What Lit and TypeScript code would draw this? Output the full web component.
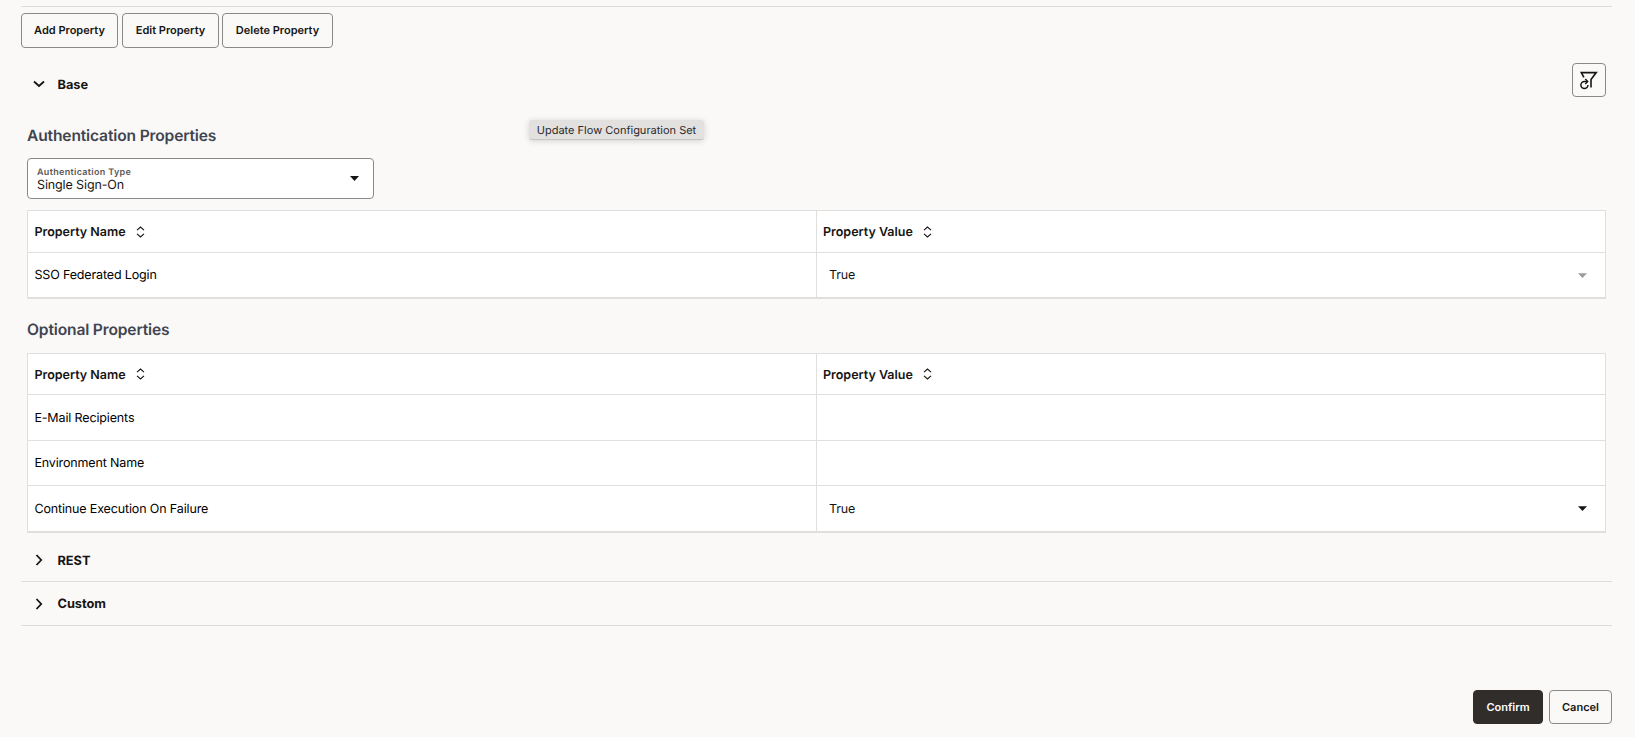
import { LitElement, html, css, svg, nothing } from "lit";
import { customElement, property } from "lit/decorators.js";

const font = css`Inter, "Liberation Sans", sans-serif`;

@customElement("property-table")
class PropertyTable extends LitElement {
  @property({ attribute: false }) rows: { name: string; value?: string; disabled?: boolean }[] = [];

  static styles = css`
    :host { display: block; font-family: ${font}; color: #161513; }
    .table { background: #fff; border: 1px solid #e1dfdd; border-bottom-width: 2px; }
    .row { display: grid; grid-template-columns: 788px 1fr; height: 45px; border-top: 1px solid #e1dfdd; box-sizing: border-box; }
    .row.head { border-top: 0; height: 41px; }
    :host(.compact) .row.head { height: 40px; }
    :host(.compact) .row:nth-child(2) { height: 46px; }
    :host(.compact) .row:nth-child(4) { height: 46px; }
    .cell { display: flex; align-items: center; padding-left: 6.4px; font-size: 12.5px; letter-spacing: -0.14px; color: #000; }
    .cell span { padding-top: 1px; }
    .cell + .cell { border-left: 1px solid #e1dfdd; padding-left: 6px; }
    .head .cell { font-weight: 600; color: #161513; letter-spacing: 0; }
    .head .cell span { padding-top: 2px; }
    .sort { margin-left: 10px; width: 9px; height: 12px; }
    .cell.value { padding-left: 12px; padding-right: 18px; justify-content: space-between; color: #161513; }
    .arrow { width: 9px; height: 5px; }
    .disabled { opacity: 0.42; }
  `;

  header(label: string) {
    return html`<div class="cell"><span>${label}</span>
      <svg class="sort" viewBox="0 0 9 12" fill="none" stroke="#161513" stroke-width="1.15">
        <path d="M1 4.2 4.5 1 8 4.2M1 7.8 4.5 11 8 7.8" />
      </svg></div>`;
  }

  render() {
    return html`<div class="table">
      <div class="row head">${this.header("Property Name")}${this.header("Property Value")}</div>
      ${this.rows.map(r => html`<div class="row">
        <div class="cell"><span>${r.name}</span></div>
        <div class="cell value">${r.value
          ? html`<span>${r.value}</span><svg class="arrow ${r.disabled ? "disabled" : ""}" viewBox="0 0 9 5"><path d="M0 .2h9L4.5 5z" fill="#161513" /></svg>`
          : nothing}</div>
      </div>`)}
    </div>`;
  }
}

@customElement("app-root")
class AppRoot extends LitElement {
  static styles = css`
    :host { display: block; font-family: ${font}; color: #161513; text-rendering: geometricPrecision; }
    * { box-sizing: border-box; }
    .page { position: relative; width: 1635px; height: 737px; padding: 6px 23px 0 21px; background: #faf9f8; display: flex; flex-direction: column; overflow: hidden; }
    .toolbar { border-top: 1px solid #dfddda; padding-top: 6px; display: flex; height: 42px; flex: none; }
    button { font: 600 11px ${font}; text-rendering: inherit; color: #161513; background: transparent; border: 1px solid #8b8987; border-radius: 4px; padding: 0; height: 34px; }
    .toolbar button { height: 35px; width: 97px; margin-right: 4px; padding-bottom: 1px; }
    .toolbar button + button { margin-right: 3px; }
    .toolbar .wide { width: 111px; }
    .base { display: flex; justify-content: space-between; padding: 15px 6px 0 0; height: 77px; flex: none; }
    .section { display: flex; align-items: center; padding-left: 12px; gap: 12.5px; font-size: 12.8px; letter-spacing: -0.05px; font-weight: 700; height: 43px; flex: none; }
    .section span { padding-top: 2px; }
    .base .section span { padding-top: 3px; }
    .base .section { height: 42px; }
    .section svg { width: 12px; height: 12px; }
    .line { border-bottom: 1px solid #dfddda; }
    .filter { width: 34px; height: 34px; display: grid; place-items: center; }
    .filter svg { width: 20px; height: 20px; }
    .body { padding: 0 6px; }
    h2 { margin: 0; padding-top: 1px; font-size: 15.6px; font-weight: 600; line-height: 20px; letter-spacing: -0.16px; color: #41444f; height: 20px; }
    .select { margin: 13px 0 11px; width: 347px; height: 41px; border: 1px solid #8b8987; border-radius: 4px; background: #fff; display: flex; align-items: center; justify-content: space-between; padding: 0 14.5px 0 9px; }
    .label { font-size: 9px; font-weight: 600; line-height: 11px; color: #5c5955; letter-spacing: 0.32px; margin-top: 3px; }
    .val { font-size: 12.5px; line-height: 15px; letter-spacing: -0.12px; color: #161513; }
    .select svg { width: 9px; height: 5px; margin-top: -1px; }
    .optional { margin: 20px 0 14px; }
    .rest { margin-top: 6px; height: 43px; }
    .custom { height: 44px; }
    .footer { display: flex; justify-content: flex-end; gap: 6px; margin-top: 64px; }
    .confirm { width: 70px; background: #312d2a; border-color: #312d2a; color: #fff; }
    .cancel { width: 63px; }
    .tooltip { position: absolute; left: 529px; top: 120px; width: 175px; height: 20px; display: flex; align-items: center; justify-content: center; font-size: 11px; color: #2b292c; background: #e2e1e0; border-radius: 3px; border-bottom: 1px solid #c6c5c4; box-shadow: 0 1px 6px rgba(0, 0, 0, 0.16); white-space: nowrap; }
  `;

  chevron(open: boolean) {
    return html`<svg viewBox="0 0 12 12" fill="none" stroke="#161513" stroke-width="1.8">
      ${open ? svg`<path d="M1 3.5 6 8 11 3.5" />` : svg`<path d="M3.5 1 8.2 6 3.5 11" />`}</svg>`;
  }

  render() {
    return html`<div class="page">
      <div class="toolbar">
        <button>Add Property</button><button>Edit Property</button><button class="wide">Delete Property</button>
      </div>
      <div class="base">
        <div class="section">${this.chevron(true)}<span>Base</span></div>
        <button class="filter" aria-label="Reset filter">
          <svg viewBox="0 0 20 20" fill="none" stroke="#161513" stroke-width="1.6">
            <path d="M4.9 7.4 2.3 2.6H17.2L12 9.4V17.6" />
            <path d="M8.9 15A3.5 3.5 0 1 1 5.4 11.5H8" stroke-width="1.5" />
            <path d="M6.3 8.9 8.7 11.4 6.3 13.9" stroke-width="1.4" />
          </svg>
        </button>
      </div>
      <div class="body">
        <h2 class="auth">Authentication Properties</h2>
        <div class="select">
          <div><div class="label">Authentication Type</div><div class="val">Single Sign-On</div></div>
          <svg viewBox="0 0 9 5"><path d="M0 0h9L4.5 5z" fill="#161513" /></svg>
        </div>
        <property-table .rows=${[{ name: "SSO Federated Login", value: "True", disabled: true }]}></property-table>
        <h2 class="optional">Optional Properties</h2>
        <property-table class="compact" .rows=${[{ name: "E-Mail Recipients" }, { name: "Environment Name" }, { name: "Continue Execution On Failure", value: "True" }]}></property-table>
      </div>
      <div class="section rest line">${this.chevron(false)}<span>REST</span></div>
      <div class="section custom line">${this.chevron(false)}<span>Custom</span></div>
      <div class="footer"><button class="confirm">Confirm</button><button class="cancel">Cancel</button></div>
      <div class="tooltip">Update Flow Configuration Set</div>
    </div>`;
  }
}
